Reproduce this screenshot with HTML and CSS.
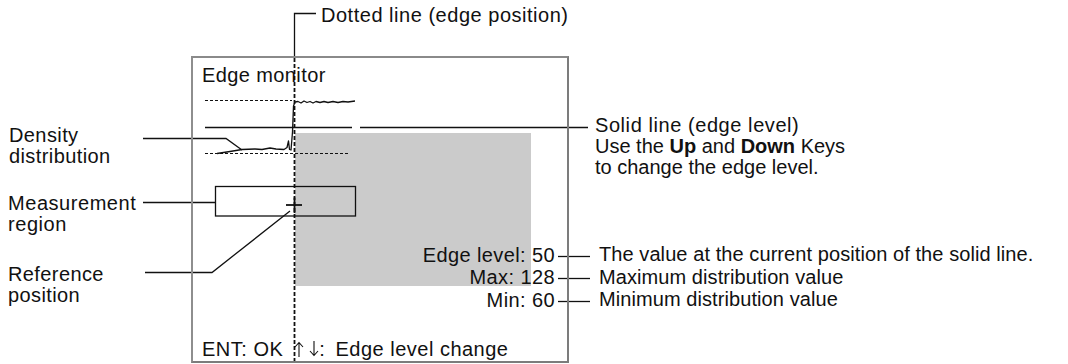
FILE: index.html
```html
<!DOCTYPE html>
<html lang="en">
<head>
  <meta charset="UTF-8">
  <title>Edge monitor</title>
  <link rel="stylesheet" href="styles.css">
</head>
<body>
  <div class="diagram">
    <!-- leader lines, graph and shaded area -->
    <svg class="wires" width="1068" height="364" viewBox="0 0 1068 364">
      <rect class="shade" x="295" y="133" width="236" height="153"/>

      <polyline class="leader" points="316,13.5 294.5,13.5 294.5,58"/>
      <line class="edge-pos" x1="294.5" y1="58" x2="294.5" y2="361"/>

      <line class="dots" x1="205" y1="100.5" x2="292" y2="100.5"/>
      <line class="dots" x1="205" y1="153.5" x2="350" y2="153.5"/>
      <line class="level" x1="205" y1="127.5" x2="352" y2="127.5"/>
      <line class="leader" x1="360" y1="127.5" x2="588" y2="127.5"/>

      <polyline class="signal" points="217,153.5 230,151.5 242,149.5 255,149 262,149.5 270,148 276,149 284,149.5 287,147.5 288.5,141 289.5,149.5 291,150 292.5,132 293.5,106 295,102 298,101.5 301,103 304,101 307,102.5 310,101.5 313,103 316,101.5 320,102.5 324,101.5 328,102.5 333,101.5 338,102.5 343,101.5 348,102 355,101"/>

      <polyline class="leader" points="143,138.5 226,138.5 242,150"/>

      <rect class="region" x="215.5" y="186.5" width="140" height="29.5"/>
      <line class="leader" x1="143" y1="202.5" x2="215" y2="202.5"/>
      <line class="cross" x1="286" y1="205" x2="302" y2="205"/>
      <line class="cross" x1="294.5" y1="197.5" x2="294.5" y2="213"/>
      <polyline class="leader" points="145,272.5 212,272.5 290,211"/>

      <line class="leader" x1="558" y1="256.5" x2="590" y2="256.5"/>
      <line class="leader" x1="558" y1="278.5" x2="590" y2="278.5"/>
      <line class="leader" x1="558" y1="301.5" x2="590" y2="301.5"/>
    </svg>

    <div class="monitor">
      <div class="monitor-title">Edge monitor</div>
      <div class="readout">
        <div>Edge level: 50</div>
        <div>Max: 128</div>
        <div>Min: 60</div>
      </div>
      <div class="hint">ENT: OK <svg class="arrow" viewBox="0 0 10 16"><path d="M5 1.5V16M1 6L5 1.5L9 6"/></svg><svg class="arrow down" viewBox="0 0 10 16"><path d="M5 0V14.5M1 10L5 14.5L9 10"/></svg><span class="sep">:</span>Edge level change</div>
    </div>

    <!-- callouts -->
    <div class="note note-dotted">Dotted line (edge position)</div>
    <div class="note note-density">Density<br>distribution</div>
    <div class="note note-region">Measurement<br>region</div>
    <div class="note note-ref">Reference<br>position</div>
    <div class="note note-solid">
      <span class="paren">Solid line (edge level)</span><br>
      Use the <b>Up</b> and <b>Down</b> Keys<br>
      to change the edge level.
    </div>
    <div class="note note-values">
      <div>The value at the current position of the solid line.</div>
      <div>Maximum distribution value</div>
      <div>Minimum distribution value</div>
    </div>
  </div>
</body>
</html>
```

FILE: styles.css
```css
body {
  margin: 0;
  background: #fff;
  color: #111;
  font-family: "Liberation Sans", Arial, sans-serif;
  font-size: 20px;
  line-height: 21px;
  letter-spacing: 0.4px;
}
.diagram {
  position: relative;
  width: 1068px;
  height: 364px;
  overflow: hidden;
}
.wires {
  position: absolute;
  left: 0;
  top: 0;
}
.wires .shade {
  fill: #cbcbcb;
}
.wires line, .wires polyline, .wires rect.region {
  fill: none;
  stroke: #111;
}
.wires .leader {
  stroke-width: 1.3;
}
.wires .edge-pos {
  stroke-width: 1.8;
  stroke-dasharray: 4 2;
}
.wires .dots {
  stroke-width: 1.2;
  stroke-dasharray: 3 2;
}
.wires .level {
  stroke-width: 1.3;
}
.wires .signal {
  stroke-width: 1.3;
  stroke-linejoin: round;
}
.wires .region {
  stroke-width: 1.3;
}
.wires .cross {
  stroke-width: 1.8;
}
.monitor {
  position: absolute;
  left: 191px;
  top: 56px;
  width: 378px;
  height: 307px;
  box-sizing: border-box;
  border: 2px solid #7c7c7c;
  border-left-color: #8e8e8e;
  border-top-color: #8a8a8a;
  display: flex;
  flex-direction: column;
  padding: 7px 12px 1px 9px;
}
.monitor-title {
  white-space: nowrap;
}
.readout {
  margin-top: auto;
  text-align: right;
  line-height: 22.5px;
}
.hint {
  margin-top: 28px;
  white-space: nowrap;
  letter-spacing: 0.5px;
}
.hint .arrow {
  width: 10px;
  height: 16px;
  vertical-align: -1px;
  margin-left: 4.5px;
  fill: none;
  stroke: #111;
  stroke-width: 1.1;
}
.hint .arrow.down {
  margin-left: 5.5px;
}
.hint .sep {
  margin-right: 10px;
}
.note {
  position: absolute;
  white-space: nowrap;
}
.note b {
  font-weight: bold;
}
.note-dotted {
  left: 321px;
  top: 5px;
  letter-spacing: 0.52px;
}
.note-density {
  left: 9px;
  top: 125px;
}
.note-region {
  left: 8px;
  top: 193px;
  letter-spacing: 0.55px;
}
.note-ref {
  left: 8px;
  top: 264px;
}
.note-solid {
  left: 595px;
  top: 115px;
  letter-spacing: 0;
}
.note-solid .paren {
  letter-spacing: 0.57px;
}
.note-values {
  left: 599px;
  top: 243px;
  line-height: 22.5px;
  letter-spacing: 0.08px;
}
```
